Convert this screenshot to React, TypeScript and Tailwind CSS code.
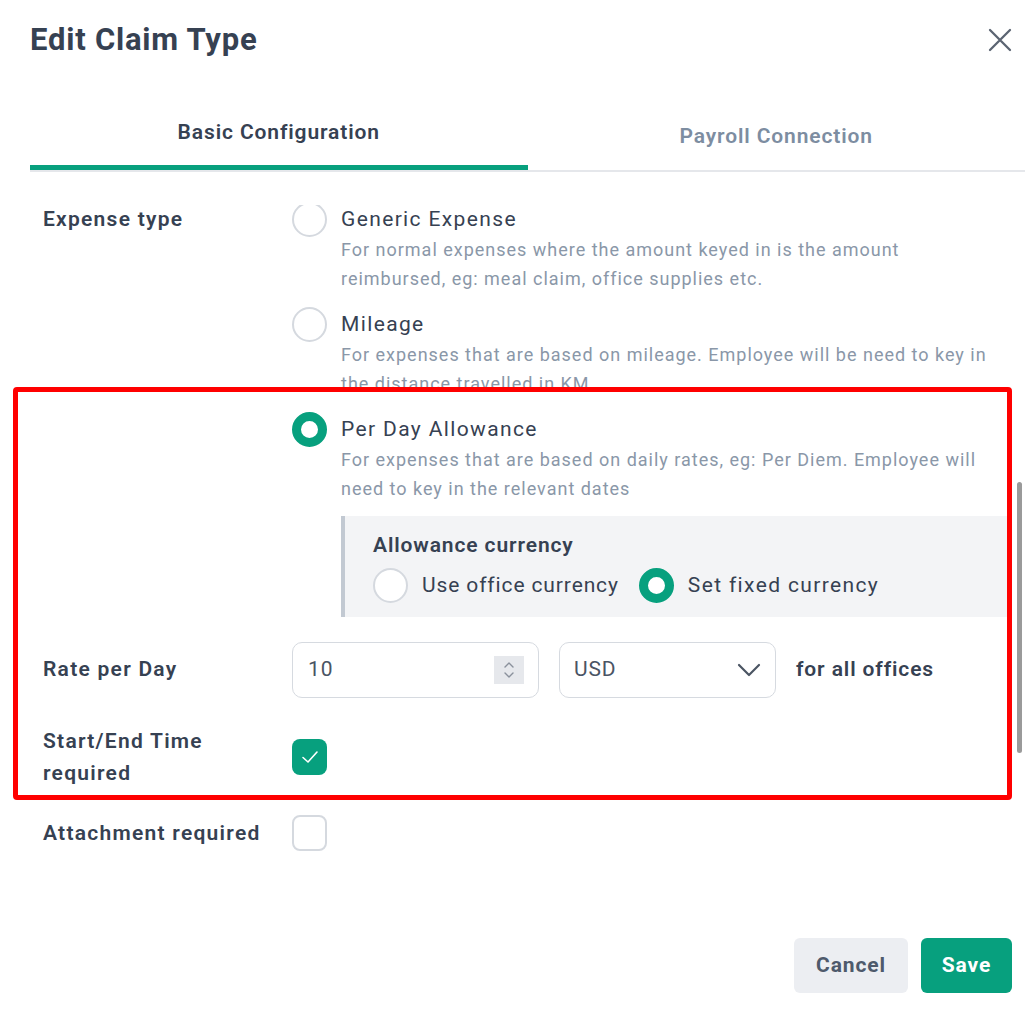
import React from "react";

const green = "bg-[#07a07e]";

function Radio({ checked }: { checked?: boolean }) {
  return checked ? (
    <span className="block w-[35px] h-[35px] shrink-0 rounded-full border-[9px] border-[#07a07e] bg-white" />
  ) : (
    <span className="block w-[35px] h-[35px] shrink-0 rounded-full border-2 border-[#d5d9df] bg-white" />
  );
}

function Option({
  title,
  lines,
  checked,
}: {
  title: string;
  lines: string[];
  checked?: boolean;
}) {
  return (
    <div className="flex gap-[14px]">
      <Radio checked={checked} />
      <div className="flex-1">
        <div className="h-[35px] leading-[35px] text-[21px] tracking-[0.065em] text-[#364152]">{title}</div>
        <div className="-mt-[2px] text-[18px] leading-[29px] tracking-[0.055em] text-[#8a97a8] whitespace-nowrap">
          {lines.map((l) => (
            <div key={l}>{l}</div>
          ))}
        </div>
      </div>
    </div>
  );
}

export default function App() {
  return (
    <div className="relative w-[1025px] h-[1027px] overflow-hidden bg-white font-['Roboto',sans-serif] tracking-[0.055em] text-[#364152]">
      {/* header */}
      <div className="flex items-center justify-between h-[80px] pl-[30px] pr-[13px]">
        <h1 className="text-[31px] font-bold leading-[36px] tracking-[0.025em] text-[#364152]">Edit Claim Type</h1>
        <button className="text-[#5b6472]">
          <svg width="24" height="24" viewBox="0 0 24 24" fill="none" stroke="currentColor" strokeWidth="2.3" strokeLinecap="round">
            <path d="M2 2L22 22M22 2L2 22" />
          </svg>
        </button>
      </div>

      {/* tabs */}
      <div className="mt-[15px] ml-[30px] flex border-b-2 border-[#e5e7eb]">
        <div className="flex-1 h-[75px] flex items-center justify-center pt-[6px] border-b-[5px] border-[#07a07e] text-[21px] font-semibold text-[#364152]">
          Basic Configuration
        </div>
        <div className="flex-1 h-[75px] flex items-center justify-center pt-[9px] text-[21px] font-semibold text-[#7d8da1]">
          Payroll Connection
        </div>
      </div>

      {/* scroll body */}
      <div className="relative mt-[33px] ml-[30px] h-[715px] overflow-hidden">
        <div className="-mt-[3px] pl-[13px] pr-[17px]">
          <div className="grid grid-cols-[249px_1fr]">
            <div className="h-[35px] leading-[35px] text-[21px] font-semibold tracking-[0.06em]">Expense type</div>
            <div className="flex flex-col gap-[14px]">
              <Option
                title="Generic Expense"
                lines={[
                  "For normal expenses where the amount keyed in is the amount",
                  "reimbursed, eg: meal claim, office supplies etc.",
                ]}
              />
              <Option
                title="Mileage"
                lines={[
                  "For expenses that are based on mileage. Employee will be need to key in",
                  "the distance travelled in KM",
                ]}
              />
              <Option
                checked
                title="Per Day Allowance"
                lines={[
                  "For expenses that are based on daily rates, eg: Per Diem. Employee will",
                  "need to key in the relevant dates",
                ]}
              />
            </div>
          </div>

          <div className="ml-[298px] mt-[13px] h-[101px] bg-[#f3f4f6] border-l-4 border-[#c2c9d2] pl-[28px] pt-[15px]">
            <div className="text-[21px] font-semibold leading-[28px]">Allowance currency</div>
            <div className="mt-[9px] flex items-center">
              <Radio />
              <span className="ml-[14px] text-[21px]">Use office currency</span>
              <span className="ml-[20px]">
                <Radio checked />
              </span>
              <span className="ml-[14px] text-[21px] tracking-[0.065em]">Set fixed currency</span>
            </div>
          </div>

          <div className="mt-[25px] grid grid-cols-[249px_1fr] items-center">
            <div className="text-[21px] font-semibold tracking-[0.06em]">Rate per Day</div>
            <div className="flex items-center">
              <div className="w-[247px] h-[56px] rounded-[10px] border border-[#d6dae0] flex items-center justify-between pl-[15px] pr-[14px]">
                <span className="text-[21px] text-[#4a5464]">10</span>
                <span className="w-[30px] h-[28px] bg-[#e6e8ec] flex items-center justify-center">
                  <svg width="12" height="20" viewBox="0 0 12 20" fill="none" stroke="#8a919c" strokeWidth="1.4" strokeLinecap="round" strokeLinejoin="round">
                    <path d="M2 7L6 3L10 7M2 13L6 17L10 13" />
                  </svg>
                </span>
              </div>
              <div className="ml-[20px] w-[217px] h-[56px] rounded-[10px] border border-[#d6dae0] flex items-center justify-between pl-[14px] pr-[14px]">
                <span className="text-[21px] text-[#4a5464]">USD</span>
                <svg width="24" height="14" viewBox="0 0 24 14" fill="none" stroke="#4b5563" strokeWidth="2.2" strokeLinecap="round" strokeLinejoin="round">
                  <path d="M2 2L12 12L22 2" />
                </svg>
              </div>
              <span className="ml-[20px] text-[21px] font-semibold">for all offices</span>
            </div>
          </div>

          <div className="mt-[27px] grid grid-cols-[249px_1fr] items-center">
            <div className="text-[21px] font-semibold leading-[32px] tracking-[0.06em]">
              Start/End Time
              <br />
              required
            </div>
            <span className={`w-[35px] h-[36px] rounded-[8px] ${green} flex items-center justify-center`}>
              <svg width="20" height="16" viewBox="0 0 20 16" fill="none" stroke="white" strokeWidth="1.6" strokeLinecap="round" strokeLinejoin="round">
                <path d="M3 8.5L8 13L17 3" />
              </svg>
            </span>
          </div>

          <div className="mt-[26px] grid grid-cols-[249px_1fr] items-center">
            <div className="text-[21px] font-semibold leading-[32px] tracking-[0.06em]">Attachment required</div>
            <span className="w-[35px] h-[36px] rounded-[8px] border-2 border-[#d5d9df] bg-white" />
          </div>
        </div>

        {/* scrollbar thumb */}
        <div className="absolute left-[987px] top-[277px] w-[5px] h-[271px] rounded-full bg-[#9a9a9a]" />
      </div>

      {/* footer */}
      <div className="mt-[18px] flex justify-end gap-[13px] pr-[13px]">
        <button className="w-[114px] h-[55px] rounded-[6px] bg-[#eceef2] text-[21px] font-bold text-[#4e5a6c]">Cancel</button>
        <button className={`w-[91px] h-[55px] rounded-[6px] ${green} text-[21px] font-bold text-white`}>Save</button>
      </div>

      {/* highlight annotation */}
      <div className="pointer-events-none absolute left-[13px] top-[387px] w-[999px] h-[413px] rounded-[4px] border-[5px] border-[#ff0000]" />
    </div>
  );
}
